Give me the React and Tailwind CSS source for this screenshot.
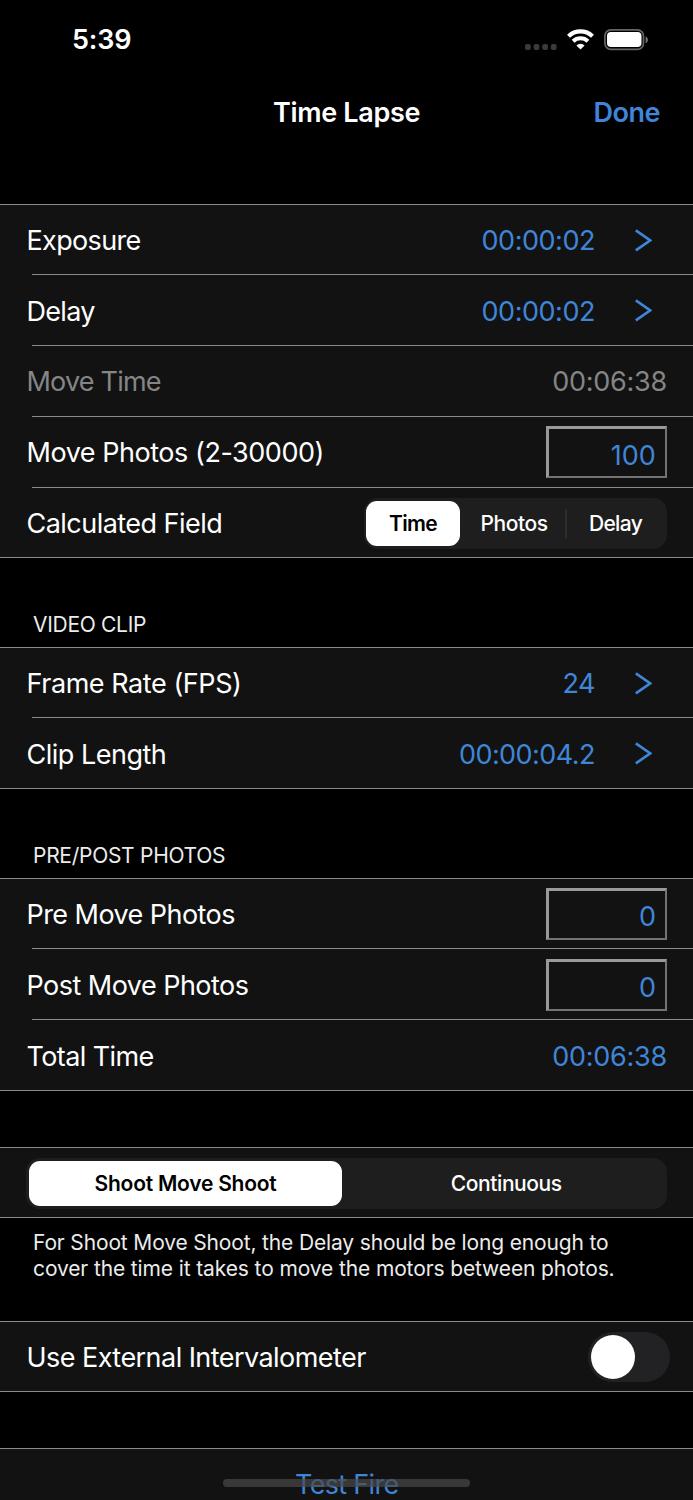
import React from 'react';

function Chevron() {
  return (
    <svg width="18" height="24" viewBox="0 0 18 24" fill="none" className="ml-[39px] mr-[15px] shrink-0">
      <path d="M1.8 1.4 16.3 11.4 1.8 21.4" stroke="#3f86d8" strokeWidth="2.6" />
    </svg>
  );
}

function Label({ text, tracking, className = 'text-white' }) {
  return <span className={`whitespace-nowrap ${tracking} ${className}`}>{text}</span>;
}

function Row({ height = 'h-[71px]', pad = 'pt-[2px]', last = false, children }) {
  return (
    <div className={`flex flex-col bg-[#121212] ${height}`}>
      <div className={`flex min-h-0 flex-1 items-center justify-between pl-[26.5px] pr-[26px] ${pad}`}>{children}</div>
      <div className={`h-px shrink-0 bg-[#8b8b8b] ${last ? '' : 'ml-8'}`} />
    </div>
  );
}

function Group({ children }) {
  return <section className="border-t border-[#8b8b8b]">{children}</section>;
}

function Value({ text, tracking }) {
  return (
    <div className="flex items-center text-[#3f86d8]">
      <span className={tracking}>{text}</span>
      <Chevron />
    </div>
  );
}

function NumberBox({ text, tracking, className = 'pt-[4px]' }) {
  return (
    <div className={`-mt-px flex h-[52px] w-[121.5px] items-center justify-end border-2 border-l-[3px] border-t-[3px] border-b-[#737373] border-l-[#999] border-r-[#737373] border-t-[#999] pr-[9px] text-[#3f86d8] ${className}`}>
      <span className={tracking}>{text}</span>
    </div>
  );
}

function SectionTitle({ text, tracking }) {
  return (
    <h2 className={`pb-[9px] pl-[33px] pt-[54px] text-[21px] leading-[26px] font-normal text-[#ececec] ${tracking}`}>
      {text}
    </h2>
  );
}

export default function App() {
  return (
    <div className="relative h-[1500px] w-[693px] overflow-hidden bg-black font-['Inter',sans-serif] text-[27px] leading-[33px] text-white">
      <div className="flex h-[78px] items-center justify-between pl-[72px] pr-[43px] pt-[1px]">
        <span className="text-[27px] font-semibold tracking-[-0.15px]">5:39</span>
        <div className="flex items-center">
          <svg width="32" height="6" viewBox="0 0 32 6" className="mr-[10px] mt-[14px]" fill="#3a3a3a">
            <rect x="0" y="0" width="5.8" height="6" rx="2" />
            <rect x="8.6" y="0" width="5.8" height="6" rx="2" />
            <rect x="17.2" y="0" width="5.8" height="6" rx="2" />
            <rect x="25.8" y="0" width="5.8" height="6" rx="2" />
          </svg>
          <svg width="27" height="21" viewBox="0 0 27 21" className="mr-[10px]" fill="none" stroke="#fff">
            <path d="M1.5 7.3a17.2 17.2 0 0 1 24 0" strokeWidth="4.2" />
            <path d="M6.1 12.2a10.8 10.8 0 0 1 14.8 0" strokeWidth="4" />
            <path d="M13.5 20.6l-4.1-4.2a5.9 5.9 0 0 1 8.2 0z" fill="#fff" stroke="none" />
          </svg>
          <svg width="46" height="22" viewBox="0 0 46 22" fill="none">
            <rect x="0.9" y="0.9" width="38.6" height="19.4" rx="6" stroke="#666" strokeWidth="1.7" />
            <rect x="3" y="3.1" width="34.5" height="15" rx="4" fill="#fff" />
            <path d="M41.6 7.4c3 .8 3 6 0 6.8z" fill="#777" />
          </svg>
        </div>
      </div>

      <header className="grid h-[126px] grid-cols-[1fr_auto_1fr] items-start pt-[18px] font-semibold">
        <span />
        <h1 className="tracking-[-0.32px]">Time Lapse</h1>
        <button className="justify-self-end pr-[33px] tracking-[-0.49px] text-[#3f86d8]">Done</button>
      </header>

      <Group>
        <Row height="h-[70px]">
          <Label text="Exposure" tracking="tracking-[-0.66px]" />
          <Value text="00:00:02" tracking="tracking-[-0.46px]" />
        </Row>
        <Row>
          <Label text="Delay" tracking="tracking-[-0.71px]" />
          <Value text="00:00:02" tracking="tracking-[-0.46px]" />
        </Row>
        <Row pad="pt-0">
          <Label text="Move Time" tracking="tracking-[-0.8px]" className="text-[#858585]" />
          <span className="tracking-[-0.25px] text-[#858585]">00:06:38</span>
        </Row>
        <Row pad="pt-0">
          <Label text="Move Photos (2-30000)" tracking="tracking-[-0.46px]" />
          <NumberBox text="100" tracking="tracking-[0.1px]" className="pt-[6px]" />
        </Row>
        <Row height="h-[70px]" last>
          <Label text="Calculated Field" tracking="tracking-[-0.53px]" />
          <div className="flex h-[51px] w-[303px] items-center rounded-[14px] bg-[#1e1e1e] py-[3px] pl-[2px] pr-[3px] text-[21px]">
            <span className="flex h-[45px] w-[94px] items-center justify-center rounded-[11px] bg-white font-semibold tracking-[-0.65px] text-black">Time</span>
            <span className="flex flex-1 items-center justify-center pl-[3px] font-medium tracking-[-0.44px]">Photos</span>
            <span className="h-[29px] w-[2px] bg-[#2d2d2d]" />
            <span className="flex w-[97px] items-center justify-center font-medium tracking-[-0.65px]">Delay</span>
          </div>
        </Row>
      </Group>

      <SectionTitle text="VIDEO CLIP" tracking="tracking-[-0.3px]" />
      <Group>
        <Row height="h-[70px]">
          <Label text="Frame Rate (FPS)" tracking="tracking-[-0.44px]" />
          <Value text="24" tracking="tracking-[-0.5px]" />
        </Row>
        <Row last>
          <Label text="Clip Length" tracking="tracking-[-0.5px]" />
          <Value text="00:00:04.2" tracking="tracking-[-0.54px]" />
        </Row>
      </Group>

      <SectionTitle text="PRE/POST PHOTOS" tracking="tracking-[-0.28px]" />
      <Group>
        <Row height="h-[70px]">
          <Label text="Pre Move Photos" tracking="tracking-[-0.56px]" />
          <NumberBox text="0" tracking="" />
        </Row>
        <Row>
          <Label text="Post Move Photos" tracking="tracking-[-0.53px]" />
          <NumberBox text="0" tracking="" />
        </Row>
        <Row last>
          <Label text="Total Time" tracking="tracking-[-0.6px]" />
          <span className="tracking-[-0.25px] text-[#3f86d8]">00:06:38</span>
        </Row>
      </Group>

      <div className="h-14" />
      <Group>
        <Row height="h-[70px]" last>
          <div className="-ml-[0.5px] flex h-[51px] w-full items-center rounded-[14px] bg-[#1e1e1e] p-[3px] text-[21px]">
            <span className="flex h-[45px] w-[313px] items-center justify-center rounded-[11px] bg-white font-semibold tracking-[-0.24px] text-black">Shoot Move Shoot</span>
            <span className="flex flex-1 items-center justify-center pl-[7px] font-medium tracking-[-0.4px]">Continuous</span>
          </div>
        </Row>
      </Group>
      <p className="h-[103px] whitespace-nowrap pl-[33px] pt-[12px] text-[21px] leading-[26px] text-[#ececec]">
        <span className="block tracking-[-0.15px]">For Shoot Move Shoot, the Delay should be long enough to</span>
        <span className="block tracking-[-0.12px]">cover the time it takes to move the motors between photos.</span>
      </p>

      <Group>
        <Row height="h-[70px]" last>
          <Label text="Use External Intervalometer" tracking="tracking-[-0.55px]" />
          <div className="-mr-[3px] -mt-[2px] flex h-[50px] w-[82px] items-center rounded-full bg-[#222224] p-[3px]">
            <span className="h-11 w-11 rounded-full bg-white" />
          </div>
        </Row>
      </Group>

      <div className="h-14" />
      <Group>
        <Row last>
          <button className="-mt-px w-full text-center tracking-[-0.7px] text-[#3f86d8]">Test Fire</button>
        </Row>
      </Group>
      <div className="absolute left-[223px] top-[1479px] h-2 w-[247px] rounded-full bg-[#484848]/70" />
    </div>
  );
}
